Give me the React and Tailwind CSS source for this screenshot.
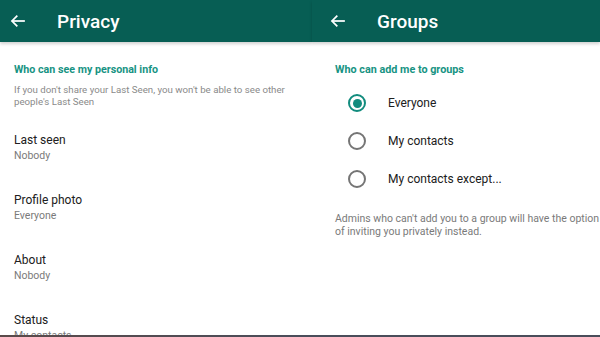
import React from "react";

const Arrow = () => (
  <svg width="16" height="16" viewBox="0 0 24 24" fill="none" stroke="white" strokeWidth="2.6" strokeLinecap="square">
    <path d="M21 12H4" />
    <path d="M11 4l-8 8 8 8" strokeLinecap="butt" />
  </svg>
);

const Header = ({ title, arrowPad, titlePad }) => (
  <div className="h-[42px] shrink-0 bg-[#075e54] flex items-center relative shadow-[0_2px_3px_rgba(0,0,0,0.18)] z-10">
    <div className={arrowPad}>
      <Arrow />
    </div>
    <div className={`${titlePad} text-white text-[19px] font-medium leading-none`}>{title}</div>
  </div>
);

const Item = ({ title, sub }) => (
  <div className="h-[60px] shrink-0 flex flex-col justify-center">
    <div className="text-[12px] leading-[16px] text-[#202020]">{title}</div>
    <div className="text-[10.5px] leading-[14px] text-[#7a7a7a] mt-[1px]">{sub}</div>
  </div>
);

const Radio = ({ checked, label }) => (
  <div className="h-[38px] flex items-center">
    <div className="w-[31px] flex justify-end">
      <div
        className={`w-[18px] h-[18px] rounded-full border-2 flex items-center justify-center ${
          checked ? "border-[#128c7e]" : "border-[#757575]"
        }`}
      >
        {checked && <div className="w-[9px] h-[9px] rounded-full bg-[#128c7e]" />}
      </div>
    </div>
    <div className="pl-[22px] text-[12px] text-[#202020]">{label}</div>
  </div>
);

export default function App() {
  return (
    <div
      className="w-[600px] h-[337px] bg-white overflow-hidden flex flex-col"
      style={{ fontFamily: "Roboto, 'Noto Sans', sans-serif" }}
    >
      <div className="flex h-[335px] overflow-hidden">
        <div className="w-[312px] flex flex-col">
          <Header title="Privacy" arrowPad="pl-[10px]" titlePad="pl-[31px]" />
          <div className="pl-[14px] pt-[21px]">
            <div className="text-[10.7px] font-bold text-[#179383] leading-[14px]">Who can see my personal info</div>
            <div className="text-[9.7px] text-[#8a8a8a] leading-[11.5px] mt-[7px] pr-[10px]">
              If you don't share your Last Seen, you won't be able to see other people's Last Seen
            </div>
            <div className="mt-[10px]">
              <Item title="Last seen" sub="Nobody" />
              <Item title="Profile photo" sub="Everyone" />
              <Item title="About" sub="Nobody" />
              <Item title="Status" sub="My contacts" />
            </div>
          </div>
        </div>
        <div className="flex-1 flex flex-col min-w-0">
          <Header title="Groups" arrowPad="pl-[18px]" titlePad="pl-[31px]" />
          <div className="pl-[23px] pt-[21px]">
            <div className="text-[10.8px] font-bold text-[#179383] leading-[14px]">Who can add me to groups</div>
            <div className="mt-[7px]">
              <Radio checked label="Everyone" />
              <Radio label="My contacts" />
              <Radio label="My contacts except..." />
            </div>
            <div className="mt-[14px] text-[10.5px] text-[#7a7a7a] leading-[13px] whitespace-nowrap">
              Admins who can't add you to a group will have the option
              <br />
              of inviting you privately instead.
            </div>
          </div>
        </div>
      </div>
      <div className="h-[2px] bg-gradient-to-r from-[#5a4a4a] via-[#4a4d5a] to-[#4a4d5a]" />
    </div>
  );
}
